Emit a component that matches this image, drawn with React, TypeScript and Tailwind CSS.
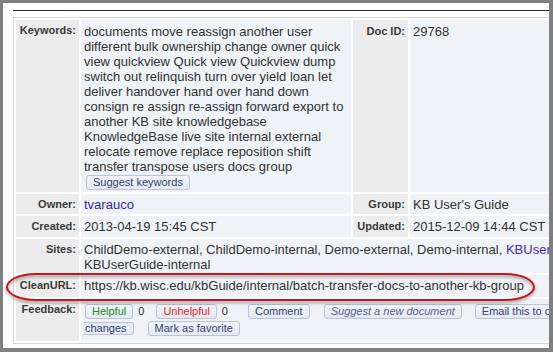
import type { ReactNode } from "react";

const keywordLines = [
  "documents move reassign another user",
  "different bulk ownership change owner quick",
  "view quickview Quick view Quickview dump",
  "switch out relinquish turn over yield loan let",
  "deliver handover hand over hand down",
  "consign re assign re-assign forward export to",
  "another KB site knowledgebase",
  "KnowledgeBase live site internal external",
  "relocate remove replace reposition shift",
  "transfer transpose users docs group",
];

function Label({ children, className = "" }: { children: ReactNode; className?: string }) {
  return <div className={`bg-[#ececec] pr-[3px] pt-[3px] text-right text-[11px] font-bold leading-[15px] text-[#3a3a3a] ${className}`}>{children}</div>;
}

function Value({ children, className = "" }: { children: ReactNode; className?: string }) {
  return <div className={`bg-[#eff2f7] pl-[3px] pt-[3px] text-[13px] leading-[15px] text-[#333] ${className}`}>{children}</div>;
}

function Btn({ children, className = "", color = "text-[#34446e]" }: { children: ReactNode; className?: string; color?: string }) {
  return (
    <span className={`inline-block h-[15px] shrink-0 whitespace-nowrap rounded-[3px] border border-[#b9c4d8] bg-gradient-to-b from-[#f1f4f9] to-[#e4e9f2] px-[6px] text-[11px] leading-[13px] ${color} ${className}`}>
      {children}
    </span>
  );
}

export default function App() {
  return (
    <div className="flex h-[352px] w-[553px] bg-[#7f7f7f] pb-[4px] pl-[3px] pr-[4px] pt-[3px] font-['Liberation_Sans',Arial,sans-serif]">
      <div className="relative flex-1 overflow-hidden bg-white pl-[10px] pt-[7px]">
        <div className="h-px w-[600px] bg-[#252525]" />
        <div className="mt-[6px] w-[640px] border border-[#d6d6d6] p-[2px]">
          <div className="grid grid-cols-[63px_270px_55px_1fr] grid-rows-[172px_20px_21px_34px_22px_42px] gap-[2px]">
            <Label>Keywords:</Label>
            <Value className="pt-[4px]">
              {keywordLines.map((line) => (
                <div key={line} className="whitespace-nowrap">{line}</div>
              ))}
              <Btn className="ml-[2px] mt-[1px]">Suggest keywords</Btn>
            </Value>
            <Label className="pt-[4px]">Doc ID:</Label>
            <Value className="pt-[4px]">29768</Value>

            <Label>Owner:</Label>
            <Value><span className="text-[#33299a]">tvarauco</span></Value>
            <Label>Group:</Label>
            <Value>KB User's Guide</Value>

            <Label>Created:</Label>
            <Value>2013-04-19 15:45 CST</Value>
            <Label>Updated:</Label>
            <Value>2015-12-09 14:44 CST</Value>

            <Label>Sites:</Label>
            <Value className="col-span-3">
              <div className="whitespace-nowrap">
                ChildDemo-external, ChildDemo-internal, Demo-external, Demo-internal, <span className="text-[#4a2ca0]">KBUserGuide-external</span>,
              </div>
              <div>KBUserGuide-internal</div>
            </Value>

            <Label>CleanURL:</Label>
            <Value className="col-span-3 whitespace-nowrap">https://kb.wisc.edu/kbGuide/internal/batch-transfer-docs-to-another-kb-group</Value>

            <Label>Feedback:</Label>
            <Value className="col-span-3 pt-[5px]">
              <div className="flex items-center whitespace-nowrap text-[11px] leading-[13px]">
                <Btn className="ml-[1px]" color="text-[#1c8a2c]">Helpful</Btn>
                <span className="ml-[5px]">0</span>
                <Btn className="ml-[12px]" color="text-[#ec1c2c]">Unhelpful</Btn>
                <span className="ml-[5px]">0</span>
                <Btn className="ml-[20px]">Comment</Btn>
                <Btn className="ml-[14px] italic" color="text-[#56648a]">Suggest a new document</Btn>
                <Btn className="ml-[13px]">Email this to customer</Btn>
              </div>
              <div className="mt-[2px] flex items-center whitespace-nowrap">
                <span className="-ml-[1px] inline-block h-[13px] rounded-r-[3px] border-y border-r border-[#b9c4d8] bg-[#e8ecf4] pl-[2px] pr-[6px] text-[11px] leading-[11px] text-[#34446e]">changes</span>
                <Btn className="ml-[14px]">Mark as favorite</Btn>
              </div>
            </Value>
          </div>
        </div>
        <div className="pointer-events-none absolute left-[3px] top-[270px] h-[28px] w-[529px] rounded-[30px/14px] border-2 border-[#c3161f] drop-shadow-[0_2px_1.5px_rgba(0,0,0,0.4)]" />
      </div>
    </div>
  );
}
